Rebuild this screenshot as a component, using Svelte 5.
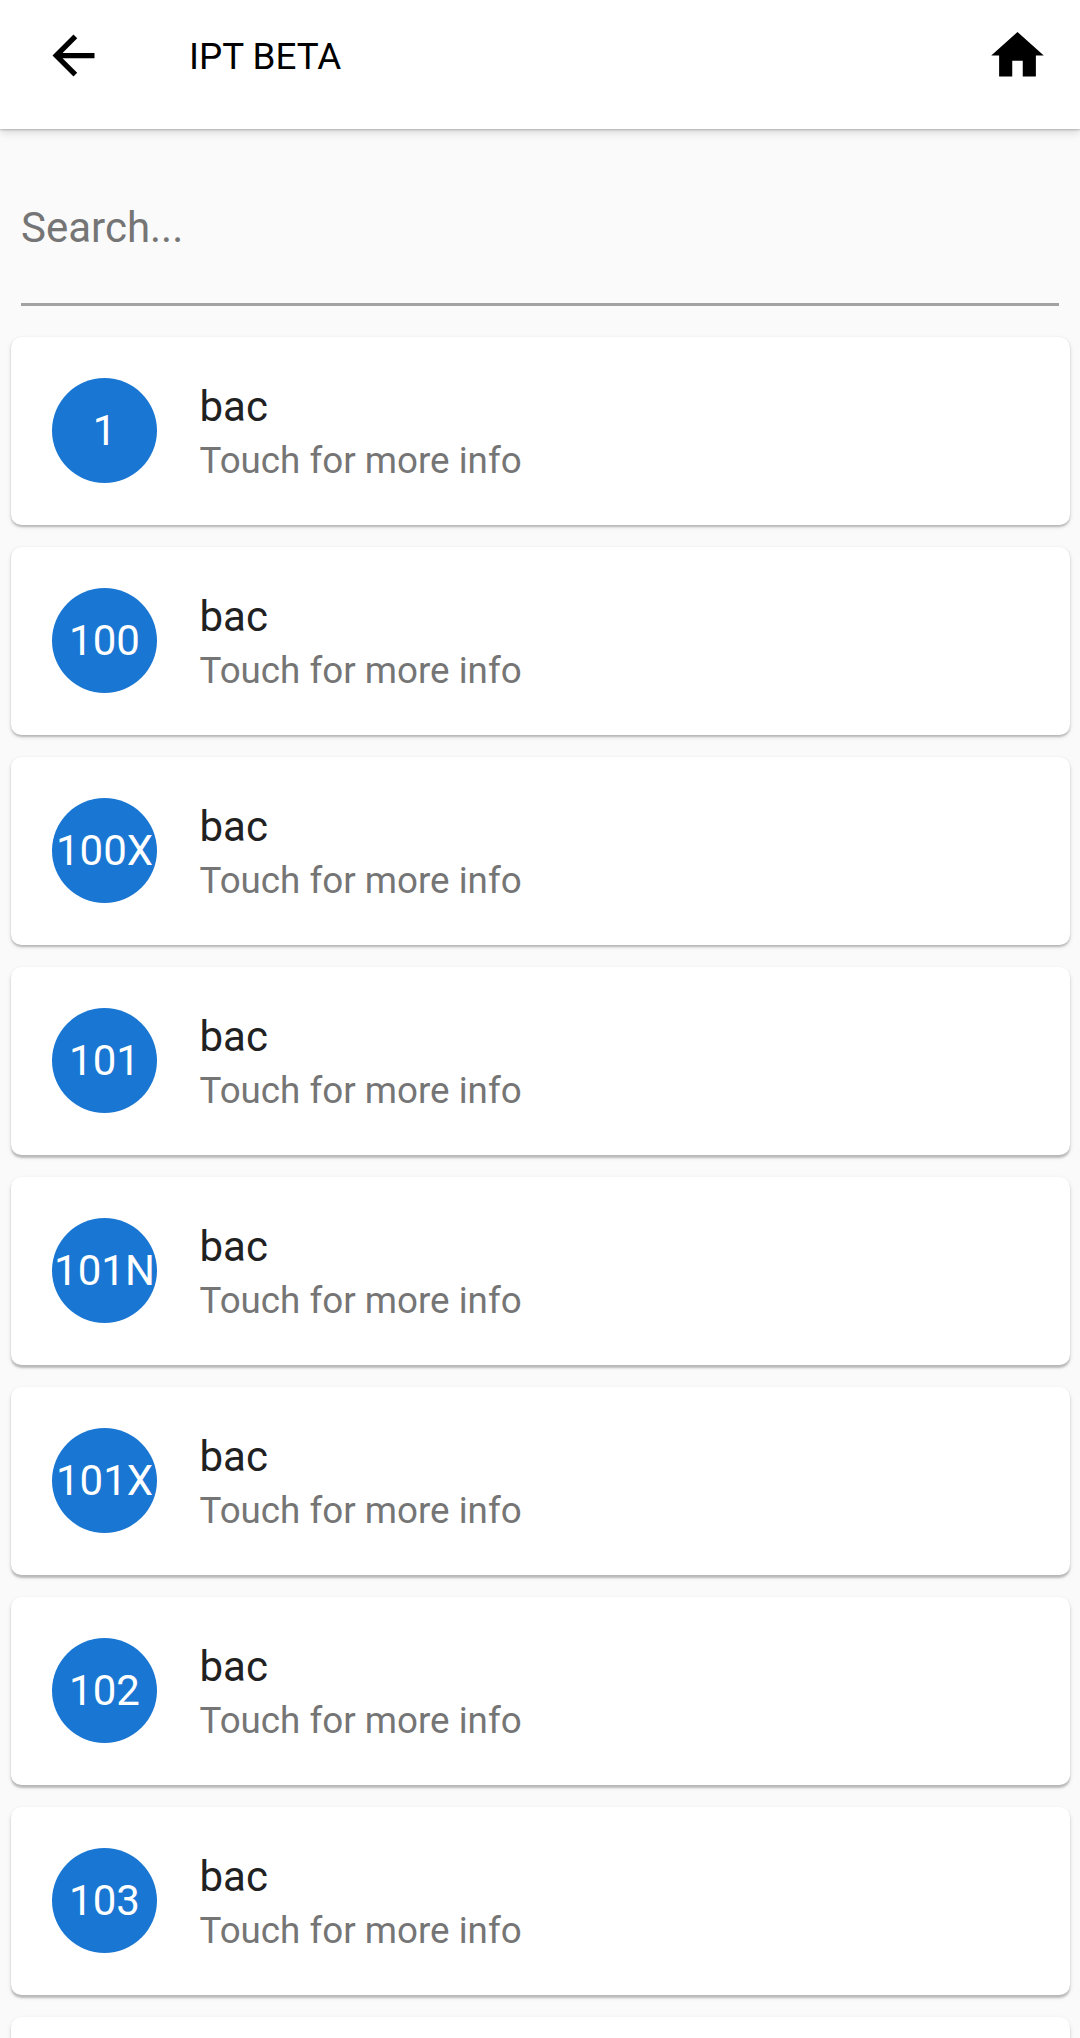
<script>
  const codes = ['1', '100', '100X', '101', '101N', '101X', '102', '103'];
</script>

<div class="screen">
  <header>
    <svg viewBox="0 0 24 24"><path d="M20 11H7.83l5.59-5.59L12 4l-8 8 8 8 1.41-1.41L7.83 13H20v-2z" /></svg>
    <h1>IPT BETA</h1>
    <svg viewBox="0 0 24 24"><path d="M10 20v-6h4v6h5v-8h3L12 3 2 12h3v8z" /></svg>
  </header>
  <div class="search">Search...</div>
  <main>
    {#each codes as code, i}
      <article style:--depth={i / 8}>
        <div class="avatar">{code}</div>
        <div class="info">
          <div class="name">bac</div>
          <div class="hint">Touch for more info</div>
        </div>
      </article>
    {/each}
    <article style:--depth={1}></article>
  </main>
</div>

<style>
  :global(body) {
    margin: 0;
    background: #fafafa;
  }
  .screen {
    width: 1080px;
    height: 2038px;
    overflow: hidden;
    background: #fafafa;
    font-family: Roboto, sans-serif;
    display: flex;
    flex-direction: column;
  }
  header {
    flex: none;
    box-sizing: border-box;
    height: 129px;
    padding: 24px 31.25px 0 42px;
    display: flex;
    align-items: flex-start;
    background: #fff;
    box-shadow: 0 1px 2px rgba(0, 0, 0, 0.22), 0 3px 9px rgba(0, 0, 0, 0.15);
  }
  svg {
    flex: none;
    width: 63px;
    height: 63px;
    fill: #000;
  }
  h1 {
    flex: 1;
    margin: 1px 0 0 84px;
    font-size: 36.75px;
    font-weight: 400;
    line-height: 63px;
    color: #000;
  }
  .search {
    flex: none;
    box-sizing: border-box;
    height: 113px;
    margin: 64px 21px 0;
    padding-top: 10px;
    border-bottom: 3px solid #a2a2a2;
    font-size: 42px;
    line-height: 50px;
    color: #757575;
  }
  main {
    padding: 31px 10.5px 0;
    display: flex;
    flex-direction: column;
    gap: 22px;
  }
  article {
    flex: none;
    box-sizing: border-box;
    height: 188px;
    padding: 0 42px 1px 41.5px;
    display: flex;
    align-items: center;
    gap: 42.5px;
    border-radius: 10.5px;
    background: #fff;
    box-shadow:
      0 calc(1.5px + var(--depth) * 1.5px) 2px rgba(0, 0, 0, 0.2),
      0 2px 5px rgba(0, 0, 0, 0.11);
  }
  .avatar {
    flex: none;
    width: 105px;
    height: 105px;
    border-radius: 50%;
    background: #1976d2;
    color: #fff;
    font-size: 42px;
    line-height: 105px;
    display: flex;
    justify-content: center;
    white-space: nowrap;
  }
  .info {
    padding-top: 3px;
  }
  .name {
    font-size: 42px;
    line-height: 56px;
    color: #212121;
  }
  .hint {
    margin-top: 1px;
    font-size: 36.75px;
    line-height: 50px;
    color: #757575;
  }
</style>
